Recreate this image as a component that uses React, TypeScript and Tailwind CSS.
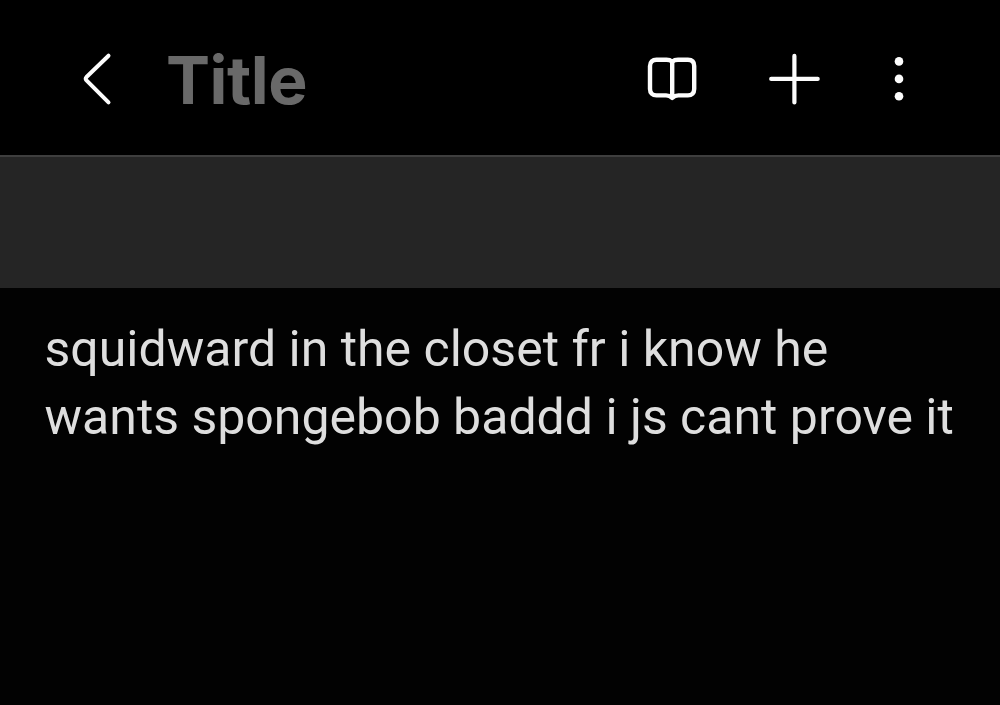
const noteLines = [
  "squidward in the closet fr i know he",
  "wants spongebob baddd i js cant prove it",
];

function BackIcon() {
  return (
    <svg width="30" height="54" viewBox="0 0 30 54" fill="none" stroke="#fcfcfc" strokeWidth="4" strokeLinecap="round" strokeLinejoin="round">
      <path d="M26.500 3.700 4.500 25q-1.500 1.700 0 3.400L26.500 50.300" />
    </svg>
  );
}

function BookIcon() {
  return (
    <svg width="50" height="46" viewBox="0 0 50 46" fill="none" stroke="#fcfcfc" strokeWidth="4.4" strokeLinecap="round" strokeLinejoin="round">
      <path d="M25.200 4.600C23.500 3.200 22 2.700 19.500 2.700H9.500C5.500 2.700 3 5 3 9v23c0 4 2.500 6.400 6.500 6.400h9.500c2.500 0 4.200.6 6.200 2.500 2-1.900 3.700-2.500 6.200-2.500h9.500c4 0 6.300-2.400 6.300-6.400V9c0-4-2.300-6.300-6.300-6.300H31c-2.500 0-4.100.5-5.800 1.900Z" />
      <path d="M25.200 5v35" />
    </svg>
  );
}

function PlusIcon() {
  return (
    <svg width="52" height="52" viewBox="0 0 52 52" fill="none" stroke="#fcfcfc" strokeWidth="4.2" strokeLinecap="round">
      <path d="M26.400 2.900v46.500M3.200 25.900h46.500" />
    </svg>
  );
}

function MoreIcon() {
  return (
    <svg width="10" height="46" viewBox="0 0 10 46" fill="#fcfcfc">
      <circle cx="5" cy="5.400" r="4.300" />
      <circle cx="5" cy="22.900" r="4.300" />
      <circle cx="5" cy="40.300" r="4.300" />
    </svg>
  );
}

export default function App() {
  return (
    <div className="flex h-[705px] w-[1000px] flex-col overflow-hidden bg-[#020202] font-['Roboto',sans-serif]">
      <header className="flex h-[155px] shrink-0 items-start bg-black pt-[52px] pl-[82px]">
        <button type="button" aria-label="Back">
          <BackIcon />
        </button>
        <h1 className="ml-[54px] w-[481px] font-['Inter',sans-serif] text-[66px] leading-[56px] font-bold tracking-[-0.5px] text-[#696969]">
          Title
        </h1>
        <button type="button" aria-label="Reading mode" className="mt-[5px]">
          <BookIcon />
        </button>
        <button type="button" aria-label="Add" className="mt-px ml-[71px]">
          <PlusIcon />
        </button>
        <button type="button" aria-label="More options" className="mt-[4px] ml-[74px]">
          <MoreIcon />
        </button>
      </header>
      <div className="h-[133px] shrink-0 border-t-2 border-[#3e3e3e] bg-[#252525]" />
      <main className="pt-[27px] pl-[44.5px] text-[50px] leading-[68px] whitespace-nowrap text-[#dedede]">
        {noteLines.map((line) => (
          <p key={line}>{line}</p>
        ))}
      </main>
    </div>
  );
}
